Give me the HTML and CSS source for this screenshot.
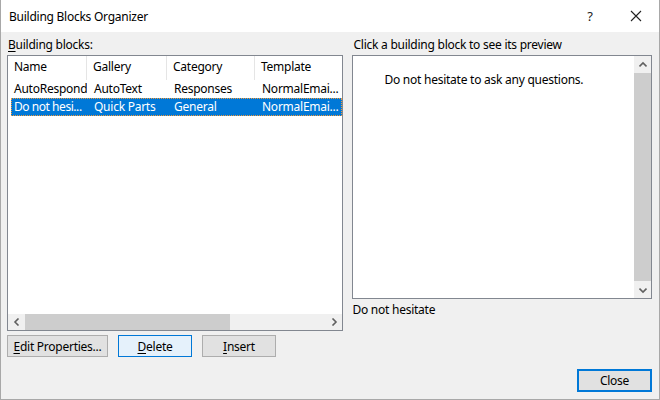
FILE: index.html
```html
<!DOCTYPE html>
<html lang="en">
<head>
    <meta charset="UTF-8">
    <title>Building Blocks Organizer</title>
    <link rel="stylesheet" href="styles.css">
</head>
<body>
    <div class="window">
        <!-- Barra de titulo -->
        <div class="titlebar">
            <span class="title">Building Blocks Organizer</span>
            <span class="help">?</span>
            <span class="close-x">
                <svg width="12" height="12" viewBox="0 0 12 12"><path d="M1 1 L11 11 M11 1 L1 11" stroke="#222" stroke-width="1.1" fill="none"/></svg>
            </span>
        </div>

        <div class="content">
            <div class="main">
                <!-- Lista de blocos -->
                <div class="left">
                    <div class="label"><u>B</u>uilding blocks:</div>
                    <div class="listbox">
                        <div class="list-head">
                            <div class="col">Name</div>
                            <div class="col">Gallery</div>
                            <div class="col">Category</div>
                            <div class="col">Template</div>
                        </div>
                        <div class="row">
                            <div class="cell">AutoRespond</div>
                            <div class="cell">AutoText</div>
                            <div class="cell">Responses</div>
                            <div class="cell">NormalEmai...</div>
                        </div>
                        <div class="row selected">
                            <div class="cell tight">Do not hesi...</div>
                            <div class="cell">Quick Parts</div>
                            <div class="cell">General</div>
                            <div class="cell">NormalEmai...</div>
                        </div>
                        <div class="hscroll">
                            <span class="arrow">
                                <svg width="8" height="8" viewBox="0 0 8 8"><path d="M5.5 0.5 L2 4 L5.5 7.5" stroke="#606060" stroke-width="1.6" fill="none"/></svg>
                            </span>
                            <div class="htrack"><div class="hthumb"></div></div>
                            <span class="arrow">
                                <svg width="8" height="8" viewBox="0 0 8 8"><path d="M2.5 0.5 L6 4 L2.5 7.5" stroke="#606060" stroke-width="1.6" fill="none"/></svg>
                            </span>
                        </div>
                    </div>
                    <div class="buttons">
                        <button class="btn btn-edit"><u>E</u>dit Properties...</button>
                        <button class="btn btn-focus"><u>D</u>elete</button>
                        <button class="btn"><u>I</u>nsert</button>
                    </div>
                </div>

                <!-- Pre-visualizacao -->
                <div class="right">
                    <div class="label">Click a building block to see its preview</div>
                    <div class="preview">
                        <div class="preview-text">Do not hesitate to ask any questions.</div>
                        <div class="vscroll">
                            <span class="arrow">
                                <svg width="8" height="8" viewBox="0 0 8 8"><path d="M0.5 5.5 L4 2 L7.5 5.5" stroke="#606060" stroke-width="1.6" fill="none"/></svg>
                            </span>
                            <div class="vtrack"><div class="vthumb"></div></div>
                            <span class="arrow">
                                <svg width="8" height="8" viewBox="0 0 8 8"><path d="M0.5 2.5 L4 6 L7.5 2.5" stroke="#606060" stroke-width="1.6" fill="none"/></svg>
                            </span>
                        </div>
                    </div>
                    <div class="block-name">Do not hesitate</div>
                </div>
            </div>

            <div class="footer">
                <button class="btn btn-close">Close</button>
            </div>
        </div>
    </div>
</body>
</html>
```

FILE: styles.css
```css
* {
    box-sizing: border-box;
}
body {
    margin: 0;
    font-family: "Noto Sans", "Open Sans", sans-serif;
    font-size: 12px;
    letter-spacing: -0.25px;
    color: #000;
    background: #fff;
}
u {
    text-decoration: underline;
    text-underline-offset: 2px;
}
.window {
    width: 660px;
    height: 400px;
    border: 1px solid #a8a8a8;
    border-top: none;
    display: flex;
    flex-direction: column;
    background: #f0f0f0;
}
.titlebar {
    height: 32px;
    background: #fff;
    display: flex;
    align-items: center;
    padding-left: 8px;
}
.title {
    flex: 1;
    font-size: 12px;
}
.help {
    width: 46px;
    text-align: center;
    font-size: 13px;
    color: #222;
}
.close-x {
    width: 46px;
    display: flex;
    justify-content: center;
}
.content {
    flex: 1;
    display: flex;
    flex-direction: column;
    padding: 0 7px 7px 6px;
}
.main {
    display: flex;
    gap: 9px;
}
.left {
    width: 337px;
}
.right {
    width: 300px;
}
.label {
    height: 23px;
    line-height: 18px;
    padding: 4px 0 0 1px;
    white-space: nowrap;
}
.listbox {
    height: 276px;
    border: 1px solid #828790;
    background: #fff;
    display: flex;
    flex-direction: column;
}
.list-head {
    height: 24px;
    display: grid;
    grid-template-columns: 79px 80px 88px 1fr;
}
.col {
    line-height: 22px;
    padding-left: 6px;
    border-right: 1px solid #e5e5e5;
    white-space: nowrap;
    overflow: hidden;
}
.col:last-child {
    border-right: none;
}
.row {
    height: 18px;
    margin-left: 3px;
    display: grid;
    grid-template-columns: 76px 80px 88px 1fr;
    line-height: 17px;
}
.cell {
    padding-left: 7px;
    white-space: nowrap;
    overflow: hidden;
}
.cell:first-child {
    padding-left: 3px;
}
.cell.tight {
    letter-spacing: -0.45px;
}
.row.selected {
    background: #0078d7;
    color: #fff;
    outline: 1px dotted #f39a3a;
    outline-offset: -1px;
}
.hscroll {
    margin-top: auto;
    height: 16px;
    display: flex;
    background: #f0f0f0;
}
.arrow {
    width: 17px;
    display: flex;
    align-items: center;
    justify-content: center;
    flex-shrink: 0;
}
.htrack {
    flex: 1;
    display: flex;
}
.hthumb {
    width: 205px;
    background: #cdcdcd;
}
.buttons {
    display: flex;
    gap: 10px;
    margin-top: 4px;
}
.btn {
    font-family: inherit;
    font-size: 12px;
    letter-spacing: -0.25px;
    height: 22px;
    width: 74px;
    padding: 0;
    background: #e1e1e1;
    border: 1px solid #adadad;
    color: #000;
}
.btn-edit {
    width: 101px;
}
.btn-focus {
    background: #e5f1fb;
    border-color: #0078d7;
}
.preview {
    height: 244px;
    border: 1px solid #828790;
    background: #fff;
    display: flex;
}
.preview-text {
    flex: 1;
    padding: 15px 0 0 31px;
}
.vscroll {
    width: 17px;
    display: flex;
    flex-direction: column;
    background: #f0f0f0;
}
.vscroll .arrow {
    height: 17px;
}
.vtrack {
    flex: 1;
    display: flex;
    flex-direction: column;
}
.vthumb {
    flex: 1;
    background: #cdcdcd;
}
.block-name {
    padding-top: 3px;
    line-height: 16px;
}
.footer {
    margin-top: auto;
    display: flex;
    justify-content: flex-end;
}
.btn-close {
    width: 75px;
    height: 23px;
    border: 2px solid #0078d7;
}
```
